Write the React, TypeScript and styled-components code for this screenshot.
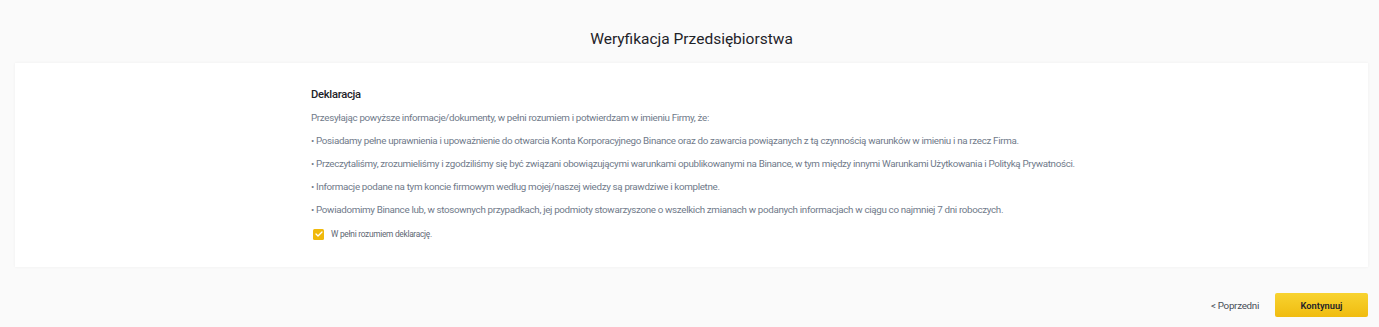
import React, { useState } from "react";
import styled, { createGlobalStyle } from "styled-components";

const Global = createGlobalStyle`
  html, body { margin: 0; padding: 0; background: #FAFAFA; }
  body { font-family: Roboto, "Noto Sans", sans-serif; color: #1E2329; }
  * { box-sizing: border-box; }
`;

const Page = styled.div`
  display: flex;
  flex-direction: column;
  padding: 0 11px 0 15px;
`;

const Header = styled.header`
  height: 63px;
  display: flex;
  align-items: center;
  justify-content: center;
  padding-top: 15px;
`;

const Title = styled.h1`
  margin: 0;
  font-size: 15.5px;
  line-height: 20px;
  font-weight: 400;
  color: #1E2329;
`;

const Card = styled.section`
  background: #FFFFFF;
  box-shadow: 0 0 3px rgba(0, 0, 0, 0.05);
  padding: 20px 0 21px;
`;

const Content = styled.div`
  width: 761px;
  margin: 0 auto;
  display: flex;
  flex-direction: column;
`;

const Heading = styled.h2`
  margin: 0;
  font-size: 11.2px;
  letter-spacing: -0.27px;
  line-height: 23px;
  font-weight: 500;
  color: #1E2329;
`;

const Para = styled.p`
  margin: 0;
  font-size: 9.8px;
  letter-spacing: -0.33px;
  line-height: 23px;
  color: #707A8A;
  white-space: nowrap;
`;

const CheckRow = styled.label`
  display: flex;
  align-items: center;
  gap: 7px;
  height: 24px;
  margin-top: 1px;
  padding-left: 2px;
  cursor: pointer;
`;

const Box = styled.span<{ $checked: boolean }>`
  width: 11px;
  height: 11px;
  border-radius: 1.5px;
  background: ${(p) => (p.$checked ? "#F0B90B" : "#FFFFFF")};
  border: ${(p) => (p.$checked ? "none" : "1px solid #B7BDC6")};
  display: flex;
  align-items: center;
  justify-content: center;
`;

const CheckLabel = styled.span`
  font-size: 8.3px;
  letter-spacing: -0.27px;
  color: #5E6673;
`;

const Footer = styled.footer`
  display: flex;
  justify-content: flex-end;
  align-items: center;
  gap: 16px;
  margin-top: 26px;
`;

const BackLink = styled.button`
  background: none;
  border: none;
  padding: 0;
  font-family: inherit;
  font-size: 9.8px;
  letter-spacing: -0.29px;
  color: #474D57;
  cursor: pointer;
`;

const Primary = styled.button`
  width: 93px;
  height: 24px;
  border: none;
  border-radius: 2px;
  background: linear-gradient(180deg, #F8D330 0%, #F0BC10 100%);
  font-family: inherit;
  font-size: 9.3px;
  font-weight: 600;
  color: #1E2329;
  cursor: pointer;
`;

export default function App() {
  const [checked, setChecked] = useState(true);
  return (
    <Page>
      <Global />
      <Header>
        <Title>Weryfikacja Przedsiębiorstwa</Title>
      </Header>
      <Card>
        <Content>
          <Heading>Deklaracja</Heading>
          <Para>Przesyłając powyższe informacje/dokumenty, w pełni rozumiem i potwierdzam w imieniu Firmy, że:</Para>
          <Para>• Posiadamy pełne uprawnienia i upoważnienie do otwarcia Konta Korporacyjnego Binance oraz do zawarcia powiązanych z tą czynnością warunków w imieniu i na rzecz Firma.</Para>
          <Para>• Przeczytaliśmy, zrozumieliśmy i zgodziliśmy się być związani obowiązującymi warunkami opublikowanymi na Binance, w tym między innymi Warunkami Użytkowania i Polityką Prywatności.</Para>
          <Para>• Informacje podane na tym koncie firmowym według mojej/naszej wiedzy są prawdziwe i kompletne.</Para>
          <Para>• Powiadomimy Binance lub, w stosownych przypadkach, jej podmioty stowarzyszone o wszelkich zmianach w podanych informacjach w ciągu co najmniej 7 dni roboczych.</Para>
          <CheckRow onClick={() => setChecked((c) => !c)}>
            <Box $checked={checked}>
              {checked && (
                <svg width="8" height="6" viewBox="0 0 8 6" fill="none">
                  <path d="M1 3L3 5L7 1" stroke="#FFFFFF" strokeWidth="1.3" strokeLinecap="round" strokeLinejoin="round" />
                </svg>
              )}
            </Box>
            <CheckLabel>W pełni rozumiem deklarację.</CheckLabel>
          </CheckRow>
        </Content>
      </Card>
      <Footer>
        <BackLink>&lt; Poprzedni</BackLink>
        <Primary>Kontynuuj</Primary>
      </Footer>
    </Page>
  );
}
